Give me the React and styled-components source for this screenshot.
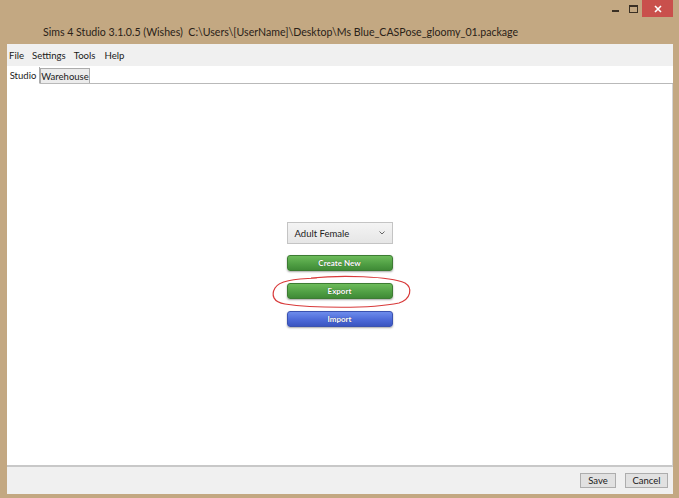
import React from 'react';
import styled, { createGlobalStyle } from 'styled-components';

const Global = createGlobalStyle`
  html, body {
    margin: 0;
    padding: 0;
    background: #c3a882;
  }
  body {
    font-family: Lato, "Open Sans", sans-serif;
  }
`;

const Window = styled.div`
  width: 679px;
  height: 498px;
  background: #c3a882;
  display: flex;
  flex-direction: column;
  overflow: hidden;
`;

const TitleBar = styled.div`
  height: 44px;
  display: flex;
  position: relative;
`;

const Title = styled.div`
  padding: 26px 0 0 43px;
  font-size: 10.6px;
  color: #2a2218;
  white-space: pre;
`;

const Controls = styled.div`
  position: absolute;
  top: 0;
  right: 6px;
  display: flex;
  align-items: flex-start;
`;

const CtrlButton = styled.div`
  width: ${(p) => p.w}px;
  height: 17px;
  display: flex;
  align-items: center;
  justify-content: center;
  background: ${(p) => (p.close ? '#c9504c' : 'transparent')};
`;

const Client = styled.div`
  flex: 1;
  margin: 0 6px 4px 7px;
  display: flex;
  flex-direction: column;
  background: #f0f0f0;
`;

const MenuBar = styled.div`
  height: 22px;
  display: flex;
  align-items: center;
  padding-left: 2px;
  background: #f0f0f0;
  font-size: 9.6px;
  color: #1a1a1a;
`;

const MenuItem = styled.span`
  padding: 0 4px 0 0;
  margin-left: ${(p) => p.ml}px;
`;

const TabStrip = styled.div`
  height: 17px;
  display: flex;
  align-items: flex-end;
  background: #fff;
  border-bottom: 1px solid #b9b9b9;
`;

const Tab = styled.div`
  width: ${(p) => p.w}px;
  height: ${(p) => (p.active ? 17 : 15)}px;
  display: flex;
  align-items: center;
  justify-content: center;
  font-size: 9.5px;
  color: #1a1a1a;
  background: ${(p) => (p.active ? '#fff' : '#ececec')};
  border: 1px solid #acacac;
  border-bottom: ${(p) => (p.active ? '1px solid #fff' : 'none')};
  margin-bottom: ${(p) => (p.active ? '-1px' : '0')};
  box-sizing: border-box;
  ${(p) => (p.active ? 'border-left: none; border-top: none;' : '')}
`;

const Content = styled.div`
  flex: 1;
  background: #fff;
  position: relative;
  display: flex;
  flex-direction: column;
  align-items: center;
  padding-top: 138px;
  border-right: 1px solid #d4d4d4;
  border-bottom: 2px solid #c8c8c8;
`;

const Select = styled.div`
  width: 106px;
  height: 22px;
  box-sizing: border-box;
  border: 1px solid #c4c4c4;
  background: linear-gradient(#f4f4f4, #e6e6e6);
  display: flex;
  align-items: center;
  justify-content: space-between;
  padding: 0 7px 0 7px;
  font-size: 9.5px;
  color: #222;
  margin-bottom: 11px;
`;

const ActionButton = styled.div`
  width: 106px;
  height: 16px;
  box-sizing: border-box;
  border-radius: 3px;
  margin-bottom: 12px;
  display: flex;
  align-items: center;
  justify-content: center;
  font-size: 8px;
  font-weight: bold;
  color: #fff;
  text-shadow: 0 0 1px rgba(0, 0, 0, 0.5);
  background: ${(p) =>
    p.blue
      ? 'linear-gradient(#6d8cec, #4a67d6 60%, #3a55c0)'
      : 'linear-gradient(#6cbb5a, #4f9e43 60%, #3f8a36)'};
  border: 1px solid ${(p) => (p.blue ? '#3a52b0' : '#3d7c33')};
  box-shadow: 0 1px 2px rgba(0, 0, 0, 0.35);
`;

const Annotation = styled.svg`
  position: absolute;
  left: 264px;
  top: 191px;
  overflow: visible;
`;

const Footer = styled.div`
  height: 27px;
  display: flex;
  align-items: center;
  justify-content: flex-end;
  gap: 9px;
  padding-right: 5px;
  background: #f0f0f0;
`;

const FooterButton = styled.div`
  width: ${(p) => p.w}px;
  height: 15px;
  box-sizing: border-box;
  border: 1px solid #adadad;
  background: #e1e1e1;
  display: flex;
  align-items: center;
  justify-content: center;
  font-size: 9.5px;
  color: #1a1a1a;
`;

export default function App() {
  return (
    <Window>
      <Global />
      <TitleBar>
        <Title>{'Sims 4 Studio 3.1.0.5 (Wishes)  C:\\Users\\[UserName]\\Desktop\\Ms Blue_CASPose_gloomy_01.package'}</Title>
        <Controls>
          <CtrlButton w={17}>
            <svg width="8" height="8" viewBox="0 0 8 8">
              <rect x="0" y="5" width="7" height="2" fill="#3a3024" />
            </svg>
          </CtrlButton>
          <CtrlButton w={18}>
            <svg width="9" height="8" viewBox="0 0 9 8">
              <rect x="0.5" y="0.5" width="8" height="7" fill="none" stroke="#3a3024" />
              <rect x="0.5" y="0.5" width="8" height="1.5" fill="#3a3024" />
            </svg>
          </CtrlButton>
          <CtrlButton w={31} close>
            <svg width="8" height="8" viewBox="0 0 8 8">
              <path d="M1 1 L7 7 M7 1 L1 7" stroke="#fff" strokeWidth="1.6" />
            </svg>
          </CtrlButton>
        </Controls>
      </TitleBar>
      <Client>
        <MenuBar>
          <MenuItem ml={0}>File</MenuItem>
          <MenuItem ml={4}>Settings</MenuItem>
          <MenuItem ml={4}>Tools</MenuItem>
          <MenuItem ml={5}>Help</MenuItem>
        </MenuBar>
        <TabStrip>
          <Tab active w={33}>Studio</Tab>
          <Tab w={50}>Warehouse</Tab>
        </TabStrip>
        <Content>
          <Select>
            Adult Female
            <svg width="6" height="4" viewBox="0 0 6 4">
              <path d="M0.5 0.5 L3 3 L5.5 0.5" fill="none" stroke="#666" strokeWidth="1" />
            </svg>
          </Select>
          <ActionButton>Create New</ActionButton>
          <ActionButton>Export</ActionButton>
          <ActionButton blue>Import</ActionButton>
          <Annotation width="142" height="34" viewBox="0 0 142 34">
            <path
              d="M40 3 C70 0 118 1 134 8 C142 13 140 24 128 28 C100 34 40 33 14 29 C2 27 0 20 4 13 C8 6 22 4 46 3"
              fill="none"
              stroke="#d83a3a"
              strokeWidth="1.2"
            />
          </Annotation>
        </Content>
        <Footer>
          <FooterButton w={36}>Save</FooterButton>
          <FooterButton w={43}>Cancel</FooterButton>
        </Footer>
      </Client>
    </Window>
  );
}
